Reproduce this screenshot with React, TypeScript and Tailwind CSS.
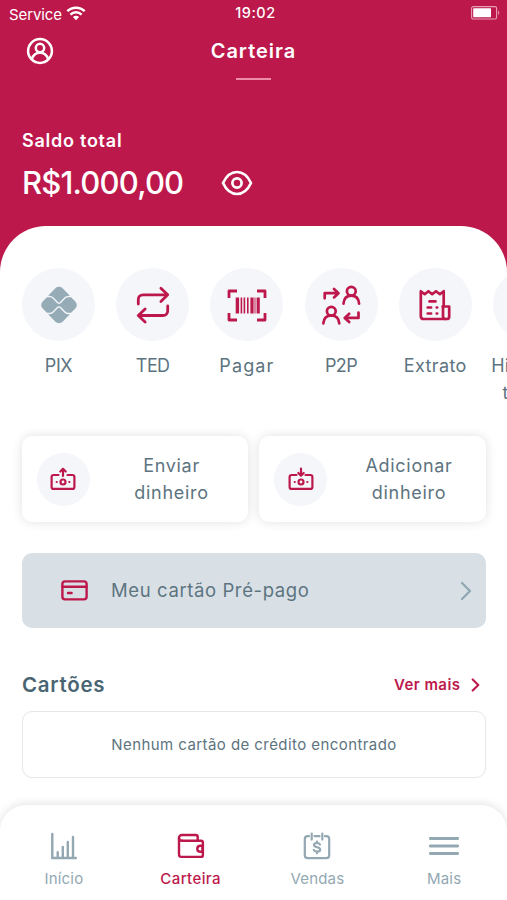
import type { ReactNode } from "react";
import clsx from "clsx";

interface IconProps {
  className?: string;
}

/* ---------- Icons ---------- */

function WifiIcon() {
  return (
    <svg width="20" height="15" viewBox="0 0 20 15" fill="none" stroke="currentColor" strokeWidth="2.5">
      <path d="M1.3 5.2a12.4 12.4 0 0 1 17.4 0" />
      <path d="M4.4 8.6a8 8 0 0 1 11.2 0" />
      <path d="M10 14.2 6.9 11.1a4.4 4.4 0 0 1 6.2 0z" fill="currentColor" stroke="none" />
    </svg>
  );
}

function BatteryIcon() {
  return (
    <svg width="29" height="14" viewBox="0 0 29 14" fill="none">
      <rect x="0.6" y="0.6" width="25" height="12.4" rx="1.6" stroke="#e8a0b5" strokeWidth="1.1" />
      <rect x="2.2" y="2.3" width="17.8" height="9" rx="0.6" fill="#fff" />
      <path d="M27.2 4.6c1.4.6 1.4 3.8 0 4.4z" fill="#e8a0b5" />
    </svg>
  );
}

function UserIcon() {
  return (
    <svg width="28" height="28" viewBox="0 0 28 28" fill="none" stroke="currentColor" strokeWidth="2.5">
      <circle cx="14" cy="14" r="11.9" />
      <circle cx="14" cy="11" r="4.2" />
      <path d="M5.8 22.3c1.2-4.4 4.2-6.6 8.2-6.6s7 2.2 8.2 6.6" />
    </svg>
  );
}

function EyeIcon() {
  return (
    <svg width="32" height="26" viewBox="0 0 32 26" fill="none" stroke="currentColor" strokeWidth="2.7" strokeLinejoin="round">
      <path d="M2 13C5.5 5.500 10.200 2 16 2s10.500 3.500 14 11c-3.500 7.500-8.200 11-14 11S5.500 20.500 2 13z" />
      <circle cx="16" cy="13" r="4.6" />
    </svg>
  );
}

function PixIcon() {
  return (
    <svg width="38" height="38" viewBox="0 0 38 38" fill="#95abb6">
      <path d="M8.100 9.700 15.400 2.300a5.100 5.100 0 0 1 7.200 0l7.300 7.400h-1.100c-1.700 0-3.300.7-4.500 1.900l-4.300 4.300a1.500 1.500 0 0 1-2.100 0l-4.300-4.300a6.300 6.300 0 0 0-4.500-1.900z" />
      <path d="M8.100 28.300l7.300 7.400a5.100 5.100 0 0 0 7.200 0l7.300-7.400h-1.100c-1.700 0-3.300-.7-4.500-1.900L20 22.100a1.500 1.500 0 0 0-2.100 0l-4.300 4.300a6.300 6.300 0 0 1-4.500 1.900z" />
      <path d="M6.900 11.200h2.600c1.200 0 2.400.5 3.200 1.300l4.300 4.400a2.900 2.900 0 0 0 4 0l4.300-4.400a4.600 4.600 0 0 1 3.200-1.300h2.600l4.200 4.200a5.100 5.100 0 0 1 0 7.200l-4.200 4.200h-2.600a4.600 4.600 0 0 1-3.200-1.300L21 21.100a2.900 2.900 0 0 0-4 0l-4.300 4.400a4.600 4.600 0 0 1-3.200 1.300H6.900l-4.200-4.200a5.100 5.100 0 0 1 0-7.200z" />
    </svg>
  );
}

function TransferIcon() {
  return (
    <svg width="36" height="38" viewBox="0 0 36 38" fill="none" stroke="currentColor" strokeWidth="2.8" strokeLinecap="round" strokeLinejoin="round">
      <path d="M3.300 18v-4.700c0-2.800 2-4.500 4.700-4.500h23.800" />
      <path d="M25.900 2.200 32.700 8.800l-6.800 6.600" />
      <path d="M32.700 20v5c0 2.800-2 4.500-4.700 4.500H4.200" />
      <path d="M10.100 22.900 3.300 29.500l6.800 6.600" />
    </svg>
  );
}

function BarcodeIcon() {
  return (
    <svg width="40" height="34" viewBox="0 0 40 34" fill="none" stroke="currentColor">
      <path d="M2 10V3h8M30 3h8v7M38 25v7h-8M10 32H2v-7" strokeWidth="2.800" strokeLinejoin="round" />
      <path d="M10.400 9.500v16" strokeWidth="3.400" />
      <path d="M14.400 9.500v16M17.400 9.500v16M20.800 9.500v16" strokeWidth="1.600" />
      <path d="M25 9.500v16" strokeWidth="3.200" />
      <path d="M28 9.500v16" strokeWidth="1" />
      <path d="M31.200 9.500v16" strokeWidth="3.200" />
    </svg>
  );
}

function PeerIcon() {
  return (
    <svg width="40" height="40" viewBox="0 0 40 40" fill="none" stroke="currentColor" strokeWidth="2.700" strokeLinecap="round" strokeLinejoin="round">
      <circle cx="30.300" cy="6.300" r="4.400" />
      <path d="M22.500 18.700c.4-5 3.300-8.000 7.800-8.000s7.400 3.000 7.800 8.000" />
      <circle cx="10.300" cy="26.300" r="4.400" />
      <path d="M2.300 38.400c.4-5 3.500-7.900 8-7.900s7.600 2.900 8 7.900" />
      <path d="M3.700 13.300V8.200h13M13 4l4.500 4.200L13 12.400" />
      <path d="M37.500 27.500v5.400H24.300M28.200 28.800l-4.500 4.100 4.500 4.200" />
    </svg>
  );
}

function ReceiptIcon() {
  return (
    <svg width="32" height="32" viewBox="0 0 32 32" fill="none" stroke="currentColor" strokeWidth="2.700" strokeLinecap="round" strokeLinejoin="round">
      <path d="M24.700 17.500V2.200l-3.800 3L17 2.200l-3.800 3-3.800-3-3.700 3L1.800 2.200v25c0 1.700 1 2.800 2.800 2.800h23c1.700 0 2.600-1 2.600-2.600v-9.900h-6.500" />
      <path d="M24 17.500v9.500c0 1.800.9 3 2.200 3" />
      <path d="M10.500 12.400h6M8.700 18.500h3.400M17.700 18.500h.5M8.700 24.500h3.400M17.700 24.500h.5" />
    </svg>
  );
}

function MoneyIcon({ direction }: { direction: "up" | "down" }) {
  return (
    <svg width="26" height="24" viewBox="0 0 26 24" fill="none" stroke="currentColor" strokeWidth="2.200" strokeLinecap="round" strokeLinejoin="round">
      <path d="M8.500 8H3.600C2.400 8 1.600 8.800 1.600 10v9.900c0 1.200.8 2 2 2h18.800c1.200 0 2-.8 2-2V10c0-1.200-.8-2-2-2h-4.900" />
      <circle cx="13" cy="15" r="2.500" />
      <path d="M6.700 15h.1M19.300 15h.1" />
      <path d={direction === "up" ? "M13 9V2.200M10.300 4.500 13 1.800l2.700 2.700" : "M13 1.500v6.800M10.300 6 13 8.700 15.700 6"} />
    </svg>
  );
}

function CardIcon() {
  return (
    <svg width="27" height="21" viewBox="0 0 27 21" fill="none" stroke="currentColor" strokeWidth="2.400" strokeLinecap="round">
      <rect x="1.400" y="1.400" width="24.200" height="18" rx="2.600" />
      <path d="M1.500 6.800h24M7 13h3.600" />
    </svg>
  );
}

function ChevronIcon({ className }: IconProps) {
  return (
    <svg className={className} viewBox="0 0 12 20" fill="none" stroke="currentColor" strokeLinecap="round" strokeLinejoin="round">
      <path d="M2 2l8 8-8 8" />
    </svg>
  );
}

function ChartIcon() {
  return (
    <svg width="28" height="28" viewBox="0 0 28 28" fill="none" stroke="currentColor" strokeWidth="2.400" strokeLinecap="round">
      <path d="M2.300 2v24h23.500" />
      <path d="M7.700 25.500v-5.200M12.800 25.500V15M17.800 25.500V10M23 25.500V5" />
    </svg>
  );
}

function WalletIcon() {
  return (
    <svg width="28" height="26" viewBox="0 0 28 26" fill="none" stroke="currentColor" strokeWidth="2.400" strokeLinecap="round" strokeLinejoin="round">
      <path d="M5 7.700h19c1.200 0 1.900.8 1.900 1.900v12.300c0 1.200-.8 2-2 2H4.400c-1.500 0-2.400-.9-2.400-2.400V4.800C2 3.200 3.200 2 4.800 2h14c1.200 0 1.900.8 1.900 1.900v3.500" />
      <path d="M2 5c0 1.600 1.200 2.700 3 2.700M25.500 12.700h-2c-2 0-3.200 1.300-3.200 3s1.200 3.100 3.200 3.100h2z" />
    </svg>
  );
}

function SalesIcon() {
  return (
    <svg width="28" height="28" viewBox="0 0 28 28" fill="none" stroke="currentColor" strokeWidth="2.200" strokeLinecap="round" strokeLinejoin="round">
      <path d="M6 4.200H4.700c-1.700 0-2.900 1.200-2.900 2.900v16.200c0 1.700 1.200 2.900 2.900 2.900h18.600c1.700 0 2.900-1.200 2.900-2.900V7.100c0-1.700-1.200-2.900-2.900-2.900H22M11.500 4.200h5M8.700 1.600v6M19.300 1.600v6" />
      <path d="M17 12.500c-.5-1-1.500-1.500-3-1.500-1.700 0-3 .8-3 2.100 0 3.100 6.200 1.200 6.200 4.400 0 1.400-1.300 2.200-3.100 2.200-1.700 0-2.900-.6-3.400-1.800M14 9.500v1.300M14 20v1.300" />
    </svg>
  );
}

function MenuIcon() {
  return (
    <svg width="32" height="24" viewBox="0 0 32 24" fill="none" stroke="currentColor" strokeWidth="2.800" strokeLinecap="round">
      <path d="M2.300 4.500h27.400M2.300 12h27.400M2.300 19.500h27.400" />
    </svg>
  );
}

/* ---------- Data ---------- */

interface Shortcut {
  label: string;
  icon?: ReactNode;
  text?: string;
}

const shortcuts: Shortcut[] = [
  { label: "PIX", icon: <PixIcon />, text: "tracking-[-0.4px]" },
  { label: "TED", icon: <TransferIcon />, text: "tracking-[-0.6px]" },
  { label: "Pagar", icon: <BarcodeIcon />, text: "tracking-[1.1px]" },
  { label: "P2P", icon: <PeerIcon />, text: "tracking-[-0.6px]" },
  { label: "Extrato", icon: <ReceiptIcon />, text: "tracking-[0.4px]" },
  { label: "Histórico transf." },
];

const tabs = [
  { label: "Início", icon: <ChartIcon />, active: false },
  { label: "Carteira", icon: <WalletIcon />, active: true },
  { label: "Vendas", icon: <SalesIcon />, active: false },
  { label: "Mais", icon: <MenuIcon />, active: false },
];

/* ---------- Sections ---------- */

function StatusBar() {
  return (
    <div className="grid h-[26px] grid-cols-3 items-center pl-[9px] pr-[7px]">
      <div className="flex items-center gap-1">
        <span className="pt-[3px] text-[15px] leading-[23px] tracking-[-0.1px]">Service</span>
        <WifiIcon />
      </div>
      <span className="pl-[2px] text-center text-[14.5px] font-medium tracking-[0.5px]">19:02</span>
      <div className="flex justify-end">
        <BatteryIcon />
      </div>
    </div>
  );
}

function ActionCard({ direction, label }: { direction: "up" | "down"; label: string }) {
  return (
    <button className="flex h-[86px] flex-1 items-center rounded-[10px] bg-white pl-[15px] shadow-[0_0_11px_rgba(0,0,0,0.12)]">
      <span className="flex size-[53px] shrink-0 items-center justify-center rounded-full bg-[#f5f6fa] text-[#bd184c]">
        <MoneyIcon direction={direction} />
      </span>
      <span className="ml-[30px] w-[104px] text-center text-[18px] leading-[27px] tracking-[0.7px]">{label}</span>
    </button>
  );
}

export default function App() {
  return (
    <div className="flex h-[900px] w-[507px] flex-col overflow-hidden bg-[#bd184c] font-['Inter',sans-serif] text-white">
      <StatusBar />

      <header className="grid h-[50px] grid-cols-3 items-center px-[26px]">
        <UserIcon />
        <h1 className="text-center text-[20px] font-semibold tracking-[1px]">Carteira</h1>
      </header>
      <div className="mx-auto mt-[2px] h-[2px] w-[35px] bg-[#f08cab]" />

      <section className="mt-[46px] h-[100px] pl-[22px]">
        <p className="text-[18px] font-semibold leading-[30px] tracking-[0.75px]">Saldo total</p>
        <div className="flex items-center">
          <p className="w-[199px] text-[31px] font-medium leading-[54px] tracking-[-0.8px]">R$1.000,00</p>
          <EyeIcon />
        </div>
      </section>

      <main className="flex-1 rounded-t-[46px] bg-white text-[#5d7480]">
        {/* Shortcuts, scrolls off the right edge */}
        <div className="flex gap-[0.200px] overflow-hidden pl-[11.500px] pt-[42px]">
          {shortcuts.map((item) => (
            <button key={item.label} className="flex w-[94px] shrink-0 flex-col items-center">
              <span className="flex size-[73px] items-center justify-center rounded-full bg-[#f5f6fa] text-[#bd184c]">
                {item.icon}
              </span>
              <span className={clsx("mt-[11px] h-[54px] text-center text-[18px] leading-[27px]", item.text)}>{item.label}</span>
            </button>
          ))}
        </div>

        <div className="mt-[30px] flex gap-[11px] px-[21.500px]">
          <ActionCard direction="up" label="Enviar dinheiro" />
          <ActionCard direction="down" label="Adicionar dinheiro" />
        </div>

        <button className="mx-[22px] mt-[31px] flex h-[75px] w-[464px] items-center rounded-[10px] bg-[#d8e0e6] pl-[39px] pr-[14px]">
          <span className="text-[#bd184c]">
            <CardIcon />
          </span>
          <span className="ml-[23px] flex-1 text-left text-[18.500px] tracking-[0.600px]">Meu cartão Pré-pago</span>
          <ChevronIcon className="h-5 w-3 stroke-[2.4] text-[#93a8b3]" />
        </button>

        <div className="mt-[42px] flex h-[30px] items-center justify-between pl-[22px] pr-[27px]">
          <h2 className="text-[20.500px] font-semibold tracking-[0.700px] text-[#4a6572]">Cartões</h2>
          <button className="flex items-center gap-[10.500px] text-[#bd184c]">
            <span className="text-[15px] font-semibold tracking-[0.450px]">Ver mais</span>
            <ChevronIcon className="h-[14px] w-[9px] stroke-3" />
          </button>
        </div>
        <div className="mx-[22px] mt-[11px] flex h-[67px] w-[464px] items-center justify-center rounded-[10px] border-[1.500px] border-[#e3e7e9] pt-[1px] text-[15px] tracking-[0.430px]">
          Nenhum cartão de crédito encontrado
        </div>

        <nav className="mt-[27px] grid h-[95px] grid-cols-4 rounded-t-[26px] bg-white pt-[26px] shadow-[0_-1px_10px_rgba(0,0,0,0.12)]">
          {tabs.map((tab) => (
            <button
              key={tab.label}
              className={clsx(
                "flex flex-col items-center pl-px",
                tab.active ? "font-medium tracking-[0.400px] text-[#bd184c]" : "tracking-[0.200px] text-[#93a8b3]"
              )}
            >
              <span className="flex h-[30px] items-center">{tab.icon}</span>
              <span className="mt-[6.500px] text-[15px] leading-[22px]">{tab.label}</span>
            </button>
          ))}
        </nav>
      </main>
    </div>
  );
}
